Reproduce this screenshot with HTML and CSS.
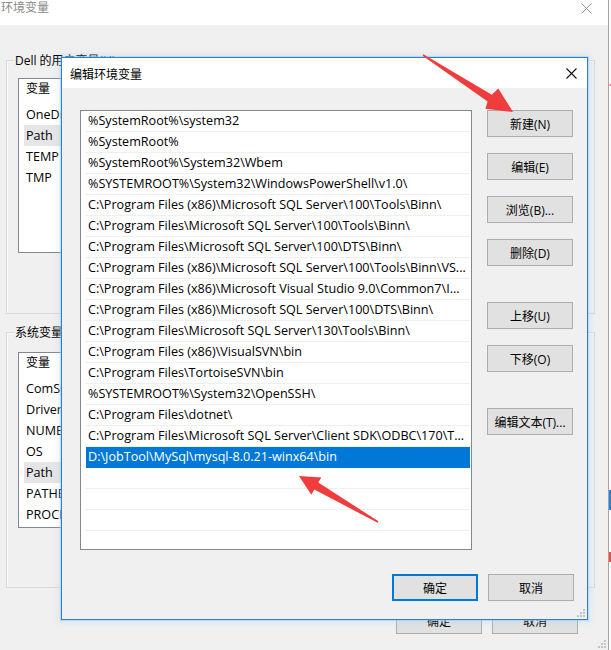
FILE: index.html
```html
<!DOCTYPE html>
<html lang="zh-CN">
<head>
<meta charset="utf-8">
<title>编辑环境变量</title>
<link rel="stylesheet" href="styles.css">
</head>
<body>
<div class="screen">
  <div class="win">
    <div class="win-title">
      <span class="win-title-text">环境变量</span>
      <svg class="x-outer" width="11" height="11" viewBox="0 0 11 11"><path d="M0.5 0.5 L10.5 10.5 M10.5 0.5 L0.5 10.5" stroke="#9a9a9a" stroke-width="1" fill="none"/></svg>
    </div>
    <div class="win-body">
      <div class="group">
        <div class="legend">Dell 的用户变量(U)</div>
        <div class="vlist vlist-user">
          <div class="vhead">变量</div>
          <div class="vrows">
            <div class="vrow">OneDrive</div>
            <div class="vrow vsel">Path</div>
            <div class="vrow">TEMP</div>
            <div class="vrow">TMP</div>
          </div>
        </div>
      </div>
      <div class="group group-sys">
        <div class="legend">系统变量(S)</div>
        <div class="vlist vlist-sys">
          <div class="vhead">变量</div>
          <div class="vrows">
            <div class="vrow">ComSpec</div>
            <div class="vrow">DriverData</div>
            <div class="vrow">NUMBER_OF_PROCESSORS</div>
            <div class="vrow">OS</div>
            <div class="vrow vsel">Path</div>
            <div class="vrow">PATHEXT</div>
            <div class="vrow">PROCESSOR_ARCHITECTURE</div>
          </div>
        </div>
      </div>
      <div class="win-foot">
        <div class="btn btn-wide">确定</div>
        <div class="btn btn-wide">取消</div>
      </div>
    </div>
    <svg class="grip grip-outer" width="8" height="8" viewBox="0 0 8 8"><g fill="#c4c4c4"><rect x="6" y="0" width="2" height="2"/><rect x="3" y="3" width="2" height="2"/><rect x="6" y="3" width="2" height="2"/><rect x="0" y="6" width="2" height="2"/><rect x="3" y="6" width="2" height="2"/><rect x="6" y="6" width="2" height="2"/></g></svg>
  </div>
  <div class="edge"></div>

  <div class="dialog">
    <div class="dlg-title">
      <span>编辑环境变量</span>
      <svg class="x-dlg" width="11" height="11" viewBox="0 0 11 11"><path d="M0.5 0.5 L10.5 10.5 M10.5 0.5 L0.5 10.5" stroke="#111" stroke-width="1.1" fill="none"/></svg>
    </div>
    <div class="dlg-body">
      <div class="dlg-main">
        <div class="plist">
          <div class="prow">%SystemRoot%\system32</div>
          <div class="prow">%SystemRoot%</div>
          <div class="prow">%SystemRoot%\System32\Wbem</div>
          <div class="prow">%SYSTEMROOT%\System32\WindowsPowerShell\v1.0\</div>
          <div class="prow">C:\Program Files (x86)\Microsoft SQL Server\100\Tools\Binn\</div>
          <div class="prow">C:\Program Files\Microsoft SQL Server\100\Tools\Binn\</div>
          <div class="prow">C:\Program Files\Microsoft SQL Server\100\DTS\Binn\</div>
          <div class="prow">C:\Program Files (x86)\Microsoft SQL Server\100\Tools\Binn\VS...</div>
          <div class="prow">C:\Program Files (x86)\Microsoft Visual Studio 9.0\Common7\I...</div>
          <div class="prow">C:\Program Files (x86)\Microsoft SQL Server\100\DTS\Binn\</div>
          <div class="prow">C:\Program Files\Microsoft SQL Server\130\Tools\Binn\</div>
          <div class="prow">C:\Program Files (x86)\VisualSVN\bin</div>
          <div class="prow">C:\Program Files\TortoiseSVN\bin</div>
          <div class="prow">%SYSTEMROOT%\System32\OpenSSH\</div>
          <div class="prow">C:\Program Files\dotnet\</div>
          <div class="prow">C:\Program Files\Microsoft SQL Server\Client SDK\ODBC\170\T...</div>
          <div class="prow psel">D:\JobTool\MySql\mysql-8.0.21-winx64\bin</div>
          <div class="prow"></div>
          <div class="prow"></div>
          <div class="prow"></div>
          <div class="prow"></div>
        </div>
        <div class="btn-col">
          <div class="btn">新建(N)</div>
          <div class="btn">编辑(E)</div>
          <div class="btn">浏览(B)...</div>
          <div class="btn">删除(D)</div>
          <div class="btn btn-sep">上移(U)</div>
          <div class="btn">下移(O)</div>
          <div class="btn btn-sep">编辑文本(T)...</div>
        </div>
      </div>
      <div class="dlg-foot">
        <div class="btn btn-wide btn-default">确定</div>
        <div class="btn btn-wide">取消</div>
      </div>
    </div>
    <svg class="grip grip-dlg" width="8" height="8" viewBox="0 0 8 8"><g fill="#c4c4c4"><rect x="6" y="0" width="2" height="2"/><rect x="3" y="3" width="2" height="2"/><rect x="6" y="3" width="2" height="2"/><rect x="0" y="6" width="2" height="2"/><rect x="3" y="6" width="2" height="2"/><rect x="6" y="6" width="2" height="2"/></g></svg>
  </div>

  <svg class="arrows" width="611" height="650" viewBox="0 0 611 650">
    <polygon fill="#f03c3c" points="422.6,55.7 487.6,101.5 485.5,108.7 513,112 498.3,88.5 491.8,94.7 423.4,54.3"/>
    <polygon fill="#f03c3c" points="378.4,521.3 318.3,482.6 321.3,477.5 299,476 311.3,494.7 314.3,489.6 377.6,522.7"/>
  </svg>
</div>
</body>
</html>
```
FILE: styles.css
```css
* { box-sizing: border-box; }
html, body { margin: 0; padding: 0; }
body {
  background: #ffffff;
  font-family: "Open Sans", "Noto Sans CJK SC", sans-serif;
  font-size: 12px;
  color: #000;
}
.screen {
  position: relative;
  width: 611px;
  height: 650px;
  overflow: hidden;
  display: flex;
}

/* outer window */
.win {
  position: relative;
  width: 609px;
  height: 650px;
  background: #f0f0f0;
  border-right: 1px solid #a3a3a3;
  display: flex;
  flex-direction: column;
}
.win-title {
  height: 25px;
  background: #ffffff;
  display: flex;
  justify-content: space-between;
  align-items: flex-start;
  flex-shrink: 0;
}
.win-title-text {
  padding-left: 1px;
  line-height: 16px;
  color: #8a8a8a;
}
.x-outer { margin-top: 3px; margin-right: 16px; }
.win-body {
  padding: 35px 13px 0 6px;
}
.group {
  border: 1px solid #d9d9d9;
  box-shadow: inset 1px 1px 0 #fafafa;
  padding: 0 11px 60px 11px;
}
.group-sys {
  margin-top: 18px;
  padding-bottom: 59px;
}
.legend {
  display: block;
  width: max-content;
  margin: -8px 0 0 -4px;
  padding: 0 1px;
  height: 16px;
  line-height: 16px;
  background: #f0f0f0;
}
.vlist {
  margin-top: 9px;
  background: #ffffff;
  border: 1px solid #828790;
  height: 175px;
  overflow: hidden;
}
.vlist-sys { margin-top: 11px; height: 176px; }
.vhead {
  height: 24px;
  line-height: 20px;
  padding-left: 7px;
}
.vrows { padding: 1px 0 0 5px; }
.vrow {
  height: 21px;
  line-height: 21px;
  padding-left: 2px;
  white-space: nowrap;
  overflow: hidden;
  font-size: 12.6px;
}
.vsel { background: #e5e5e5; }
.win-foot {
  margin-top: 19px;
  display: flex;
  justify-content: flex-end;
  gap: 10px;
  padding-right: 17px;
}
.edge {
  width: 2px;
  height: 650px;
  background: linear-gradient(to bottom,
    #ffffff 0, #ffffff 84px, #e8a0a0 84px, #e8a0a0 86px, #ffffff 86px,
    #ffffff 490px, #2f7fd0 490px, #2f7fd0 510px, #ffffff 510px,
    #ffffff 552px, #e25050 552px, #e25050 562px, #ffffff 562px);
}

/* buttons */
.btn {
  height: 27px;
  border: 1px solid #adadad;
  background: #e1e1e1;
  display: flex;
  align-items: center;
  justify-content: center;
  white-space: nowrap;
  flex-shrink: 0;
}
.btn-wide { width: 86px; }
.btn-default { border: 2px solid #0078d7; }

/* dialog */
.dialog {
  position: absolute;
  left: 61px;
  top: 57px;
  width: 527px;
  height: 563px;
  border: 1px solid #2c80cf;
  box-shadow: 0 0 0 1px rgba(150, 200, 240, 0.45), 0 0 6px 2px rgba(160, 205, 240, 0.35);
  background: #f0f0f0;
  display: flex;
  flex-direction: column;
}
.dlg-title {
  height: 30px;
  background: #ffffff;
  display: flex;
  align-items: center;
  justify-content: space-between;
  padding: 1px 10px 0 8px;
  flex-shrink: 0;
}
.dlg-body {
  flex: 1;
  padding: 22px 13px 17px 18px;
  display: flex;
  flex-direction: column;
}
.dlg-main {
  display: flex;
  gap: 15px;
}
.plist {
  width: 392px;
  height: 440px;
  background: #ffffff;
  border: 1px solid #828790;
  padding: 0 1px 0 5px;
  overflow: hidden;
}
.prow {
  height: 21px;
  line-height: 20px;
  border-bottom: 1px solid #efefef;
  padding-left: 2px;
  white-space: nowrap;
  overflow: hidden;
  font-size: 12.6px;
}
.psel {
  background: #0078d7;
  border-bottom-color: #0078d7;
  color: #ffffff;
}
.btn-col {
  width: 86px;
  display: flex;
  flex-direction: column;
  gap: 16px;
}
.btn-sep { margin-top: 20px; }
.dlg-foot {
  margin-top: 24px;
  display: flex;
  justify-content: flex-end;
  gap: 10px;
}

.grip { position: absolute; }
.grip-dlg { right: 2px; bottom: 2px; }
.grip-outer { right: 2px; bottom: 2px; }

.arrows {
  position: absolute;
  left: 0;
  top: 0;
  pointer-events: none;
}
```
